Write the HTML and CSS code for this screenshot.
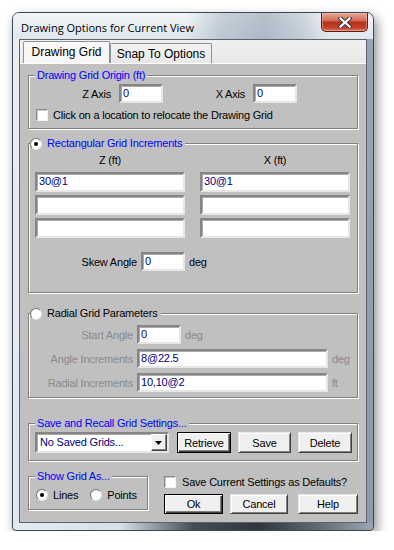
FILE: index.html
```html
<!DOCTYPE html>
<html>
<head>
<meta charset="utf-8">
<link rel="stylesheet" href="styles.css">
</head>
<body>
<div class="window">
  <div class="titlebar">
    <span class="title">Drawing Options for Current View</span>
    <div class="close">
      <svg width="14" height="11" viewBox="0 0 14 11">
        <path d="M2.5 1.5 L11.5 9.5 M11.5 1.5 L2.5 9.5" stroke="#3a3a3a" stroke-width="4.2" stroke-linecap="square"/>
        <path d="M2.5 1.5 L11.5 9.5 M11.5 1.5 L2.5 9.5" stroke="#ffffff" stroke-width="2.2" stroke-linecap="square"/>
      </svg>
    </div>
  </div>
  <div class="client">
    <div class="tabs">
      <div class="tab active">Drawing Grid</div>
      <div class="tab inactive">Snap To Options</div>
    </div>
    <div class="panel">

      <div class="group g-origin">
        <div class="legend blue">Drawing Grid Origin (ft)</div>
        <div class="origin-row">
          <span class="axis-lbl">Z Axis</span><div class="field w44">0</div>
          <span class="axis-lbl">X Axis</span><div class="field w44">0</div>
        </div>
        <div class="check-row">
          <span class="check"></span><span class="check-text">Click on a location to relocate the Drawing Grid</span>
        </div>
      </div>

      <div class="group g-rect">
        <div class="legend legend-radio blue"><span class="radio on"></span><span>Rectangular Grid Increments</span></div>
        <div class="grid-cols">
          <span class="col-lbl">Z (ft)</span>
          <span class="col-lbl">X (ft)</span>
          <div class="field">30@1</div>
          <div class="field">30@1</div>
          <div class="field"></div>
          <div class="field"></div>
          <div class="field"></div>
          <div class="field"></div>
        </div>
        <div class="skew-row">
          <span class="skew-lbl">Skew Angle</span><div class="field w44">0</div><span class="unit">deg</span>
        </div>
      </div>

      <div class="group g-radial">
        <div class="legend legend-radio"><span class="radio"></span><span>Radial Grid Parameters</span></div>
        <div class="rad-row first">
          <span class="rad-lbl">Start Angle</span><div class="field w44">0</div><span class="unit dis">deg</span>
        </div>
        <div class="rad-row">
          <span class="rad-lbl">Angle Increments</span><div class="field w191">8@22.5</div><span class="unit dis">deg</span>
        </div>
        <div class="rad-row">
          <span class="rad-lbl">Radial Increments</span><div class="field w191">10,10@2</div><span class="unit dis">ft</span>
        </div>
      </div>

      <div class="group g-save">
        <div class="legend blue">Save and Recall Grid Settings...</div>
        <div class="save-row">
          <div class="select">
            <span class="select-text">No Saved Grids...</span>
            <span class="drop"><svg width="7" height="4" viewBox="0 0 7 4"><path d="M0 0 H7 L3.5 4 Z" fill="#000"/></svg></span>
          </div>
          <div class="btn def w54">Retrieve</div>
          <div class="btn w53">Save</div>
          <div class="btn w54">Delete</div>
        </div>
      </div>

      <div class="bottom">
        <div class="group g-show">
          <div class="legend blue">Show Grid As...</div>
          <div class="show-row">
            <span class="radio on"></span><span class="opt">Lines</span>
            <span class="radio"></span><span class="opt">Points</span>
          </div>
        </div>
        <div class="right-col">
          <div class="def-row"><span class="check"></span><span class="check-text">Save Current Settings as Defaults?</span></div>
          <div class="btn-row">
            <div class="btn def w59">Ok</div>
            <div class="btn w58">Cancel</div>
            <div class="btn w60">Help</div>
          </div>
        </div>
      </div>

    </div>
  </div>
</div>
</body>
</html>
```

FILE: styles.css
```css
body {
  margin: 0;
  background: #ffffff;
  font-family: "Liberation Sans", Arial, sans-serif;
  font-size: 11px;
  letter-spacing: -0.2px;
  color: #000;
}

.window {
  margin: 12px 0 0 12px;
  width: 362px;
  height: 519px;
  box-sizing: border-box;
  border: 1px solid #3d4752;
  border-radius: 7px 7px 4px 4px;
  padding: 0 6px 7px 6px;
  display: flex;
  flex-direction: column;
  background:
    linear-gradient(to right, #e4ebf2 0%, #d6dfea 30%, #454d55 50%, #2f353b 68%, #5e6770 84%, #9ba6b1 100%) left bottom / 100% 7px no-repeat,
    linear-gradient(#95a5b5, #8a9aab) right top / 6px 100% no-repeat,
    linear-gradient(#e9eef3, #dfe6ed);
  box-shadow: 3px 5px 12px rgba(0, 0, 0, 0.45);
}

.titlebar {
  height: 26px;
  margin: 0 -6px;
  padding: 0 6px;
  display: flex;
  justify-content: space-between;
  align-items: flex-start;
  border-radius: 6px 6px 0 0;
  background:
    linear-gradient(to right, rgba(120,140,160,0) 48%, rgba(120,140,160,0.35) 58%, rgba(110,130,150,0.45) 70%, rgba(120,140,160,0.3) 80%, rgba(120,140,160,0) 88%),
    linear-gradient(#f2f5f8, #dfe6ed);
}

.title {
  font-family: "Open Sans", "Noto Sans", sans-serif;
  font-size: 11px;
  letter-spacing: 0;
  line-height: 15px;
  padding: 7px 0 0 2px;
  color: #000;
}

.close {
  width: 47px;
  height: 19px;
  box-sizing: border-box;
  margin-right: -1px;
  border: 1px solid #5b1d14;
  border-top: none;
  border-radius: 0 0 5px 5px;
  background: linear-gradient(#e7a696 0%, #d2705d 40%, #b7321d 52%, #c1412b 80%, #d9745e 100%);
  box-shadow: inset 0 0 0 1px rgba(255, 200, 190, 0.45);
  display: flex;
  align-items: center;
  justify-content: center;
}

.client {
  flex: 1;
  border: 1px solid #59636e;
  display: flex;
  flex-direction: column;
  background: #ececec;
}

.tabs {
  height: 23px;
  display: flex;
  align-items: flex-end;
  padding-left: 3px;
  background: linear-gradient(#f0f0f0, #e9e9e9);
}

.tab {
  box-sizing: border-box;
  border: 1px solid #8d9196;
  border-bottom: none;
  display: flex;
  align-items: center;
  justify-content: center;
  font-size: 12px;
  letter-spacing: 0;
  border-radius: 2px 2px 0 0;
}

.tab.active {
  width: 87px;
  height: 22px;
  background: #f7f7f7;
  padding-bottom: 1px;
}

.tab.inactive {
  width: 102px;
  height: 20px;
  background: linear-gradient(#f3f3f3, #e8e8e8);
  padding-top: 1px;
}

.panel {
  flex: 1;
  background: #c0c0c0;
  border-top: 1px solid #ffffff;
  padding: 0 8px;
  display: flex;
  flex-direction: column;
}

.group {
  border: 1px solid #808080;
  box-shadow: inset 1px 1px 0 #ffffff, 1px 1px 0 #ffffff;
}

.legend {
  width: max-content;
  height: 13px;
  line-height: 13px;
  margin: -7px 0 0 6px;
  padding: 0 2px;
  background: #c0c0c0;
  display: flex;
  align-items: center;
}

.blue { color: #0000ff; }

.legend-radio {
  margin-left: 1px;
  padding: 0 3px 0 0;
  gap: 5px;
}

.field {
  box-sizing: border-box;
  height: 19px;
  background: #ffffff;
  border: 2px solid;
  border-color: #858585 #e6e6e6 #e6e6e6 #858585;
  box-shadow: inset 1px 1px 0 #a9a9a9;
  color: #000080;
  padding-left: 2px;
  line-height: 15px;
  white-space: nowrap;
}

.w44 { width: 44px; }
.w191 { width: 191px; }

.radio {
  width: 12px;
  height: 12px;
  box-sizing: border-box;
  border-radius: 50%;
  border: 1px solid;
  border-color: #7a7a7a #e4e4e4 #e4e4e4 #7a7a7a;
  background: radial-gradient(circle at 60% 60%, #ffffff 55%, #e8e8e8 100%);
  display: flex;
  align-items: center;
  justify-content: center;
  flex: none;
}

.radio.on::after {
  content: "";
  width: 4px;
  height: 4px;
  border-radius: 50%;
  background: #000;
}

.check {
  width: 12px;
  height: 12px;
  box-sizing: border-box;
  background: #ffffff;
  border: 1px solid;
  border-color: #8a8a8a #f2f2f2 #f2f2f2 #8a8a8a;
  box-shadow: inset 1px 1px 0 #c8c8c8;
  flex: none;
}

/* group 1 */
.g-origin {
  margin-top: 11px;
  padding-bottom: 7px;
}

.origin-row {
  display: flex;
  align-items: center;
  margin-top: 2px;
}

.axis-lbl {
  width: 82px;
  margin-right: 8px;
  text-align: right;
}

.check-row {
  display: flex;
  align-items: center;
  height: 13px;
  margin: 5px 0 0 7px;
  gap: 5px;
}

/* group 2 */
.g-rect {
  margin-top: 14px;
  padding-bottom: 21px;
}

.grid-cols {
  display: grid;
  grid-template-columns: 150px 150px;
  column-gap: 15px;
  row-gap: 3px;
  margin: 4px 0 0 6px;
}

.grid-cols .field { height: 20px; }

.col-lbl {
  text-align: center;
  height: 13px;
  line-height: 13px;
  margin-bottom: 2px;
}

.skew-row {
  display: flex;
  align-items: center;
  margin: 14px 0 0 6px;
}

.skew-lbl {
  width: 102px;
  margin-right: 4px;
  text-align: right;
}

.unit { margin-left: 4px; }
.dis { color: #8a8a8a; }

/* group 3 */
.g-radial {
  margin-top: 20px;
  padding-bottom: 5px;
}

.rad-row {
  display: flex;
  align-items: center;
  margin-top: 5px;
}

.rad-lbl {
  width: 104px;
  margin-right: 4px;
  text-align: right;
  color: #8a8a8a;
}

/* group 4 */
.g-save {
  margin-top: 25px;
  padding-bottom: 7px;
}

.save-row {
  display: flex;
  align-items: center;
  margin: 2px 0 0 6px;
}

.select {
  box-sizing: border-box;
  width: 134px;
  height: 21px;
  background: #ffffff;
  border: 2px solid;
  border-color: #858585 #e6e6e6 #e6e6e6 #858585;
  box-shadow: inset 1px 1px 0 #a9a9a9;
  display: flex;
  align-items: stretch;
  margin-right: 8px;
}

.select-text {
  flex: 1;
  color: #000080;
  padding-left: 3px;
  line-height: 17px;
  white-space: nowrap;
}

.drop {
  width: 16px;
  box-sizing: border-box;
  background: #efefef;
  border: 1px solid;
  border-color: #ffffff #404040 #404040 #ffffff;
  box-shadow: inset -1px -1px 0 #808080;
  display: flex;
  align-items: center;
  justify-content: center;
  padding-right: 1px;
}

.btn {
  box-sizing: border-box;
  height: 21px;
  background: #f0f0f0;
  border: 1px solid;
  border-color: #e8e8e8 #404040 #404040 #e8e8e8;
  box-shadow: inset 1px 1px 0 #ffffff, inset -1px -1px 0 #808080;
  display: flex;
  align-items: center;
  justify-content: center;
  flex: none;
}

.btn.def {
  border-color: #000000;
  box-shadow: inset 1px 1px 0 #ffffff, inset -1px -1px 0 #404040, inset -2px -2px 0 #808080;
}

.w53 { width: 53px; }
.w54 { width: 54px; }
.w58 { width: 58px; }
.w59 { width: 59px; }
.w60 { width: 60px; }

.save-row .btn + .btn { margin-left: 7px; }

/* bottom */
.bottom {
  display: flex;
  gap: 16px;
}

.g-show {
  width: 120px;
  box-sizing: border-box;
  margin-top: 15px;
  align-self: flex-start;
  padding-bottom: 8px;
}

.show-row {
  display: flex;
  align-items: center;
  height: 13px;
  margin: 5px 0 0 7px;
}

.opt { margin-left: 5px; }
.opt + .radio { margin-left: 12px; }

.right-col {
  display: flex;
  flex-direction: column;
}

.def-row {
  display: flex;
  align-items: center;
  height: 13px;
  margin-top: 14px;
  gap: 6px;
}

.btn-row {
  display: flex;
  margin-top: 6px;
}

.btn-row .btn { height: 20px; }
.btn-row .btn + .btn { margin-left: 7px; }
.btn-row .btn.w60 { margin-left: 10px; }
```
